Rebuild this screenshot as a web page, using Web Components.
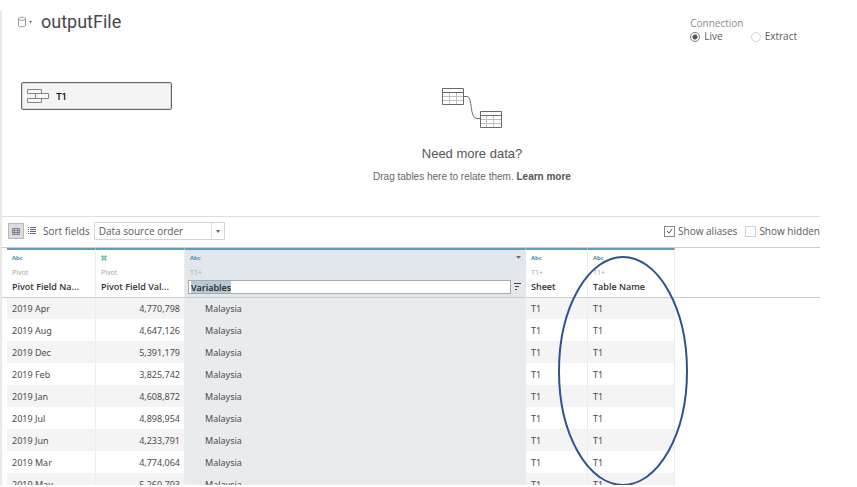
<!DOCTYPE html>
<html lang="en">
<head>
<meta charset="utf-8">
<title>outputFile</title>
<style>
body{margin:0;background:#fff;color:#5a5a5a;font-family:"Open Sans","Noto Sans",sans-serif;font-size:10px}
</style>
</head>
<body>
<data-source-page></data-source-page>
<script>
class BaseElement extends HTMLElement {
  constructor() {
    super();
    this.attachShadow({mode: 'open'}).innerHTML = this.constructor.template;
  }
}

customElements.define('source-header', class extends BaseElement {
  static template = `<style>
    :host{display:flex;justify-content:space-between;align-items:flex-start;padding:0 23px 0 14px}
    .title{display:flex;align-items:center;gap:8px}
    h1{margin:0;font:400 18px/22px Roboto,sans-serif;color:#484848}
    button{border:0;background:none;padding:0;display:flex}
    fieldset{border:0;margin:0;padding:5px 0 0;min-width:0}
    legend{padding:0;float:left;line-height:14px;color:#8a8a8a}
    .options{clear:both;display:flex;gap:28px}
    label{display:flex;align-items:center;gap:4px;line-height:13px}
    input{appearance:none;margin:0;box-sizing:border-box;width:10px;height:10px;border:1px solid #d5d5d5;border-radius:50%;background:#fff}
    input:checked{border-color:#777;background:radial-gradient(circle,#555 0 2px,#fff 3px)}
  </style>
  <div class="title">
    <button aria-label="Data source menu"><svg width="17" height="14" viewBox="0 0 17 14" fill="none" stroke="#959595"><path d="M2.5 3.5C2.5 1.8 9.5 1.8 9.5 3.5V10.5C9.5 12.2 2.5 12.2 2.5 10.5ZM2.5 3.5C2.5 5.8 9.5 5.8 9.5 3.5"/><path d="M13 6h3l-1.500 2z" fill="#555" stroke="none"/></svg></button>
    <h1>outputFile</h1>
  </div>
  <fieldset><legend>Connection</legend>
    <div class="options"><label><input type="radio" name="c" checked>Live</label><label><input type="radio" name="c">Extract</label></div>
  </fieldset>`;
});

customElements.define('logical-table', class extends BaseElement {
  static template = `<style>
    :host{display:flex;align-items:center;gap:6px;box-sizing:border-box;width:151px;height:28px;padding:0 5px;border:1px solid #666;border-radius:2px;background:#f4f4f4;outline:1px solid #d8d8d8;outline-offset:-2px;color:#111;font:600 9px Inter,sans-serif}
  </style>
  <svg width="23" height="16" viewBox="0 0 23 16" fill="#f8f8f8" stroke="#858585"><path d="M.5 1.5h14v4H.5zM.5 10.5h14v4H.5zM8.5 5.5h13v5h-13z"/></svg>
  <slot></slot>`;
});

customElements.define('relate-hint', class extends BaseElement {
  static template = `<style>
    :host{display:flex;flex-direction:column;align-items:center;font-family:"Liberation Sans",Arial,sans-serif}
    h2{margin:17px 0 8px;font-weight:400;font-size:13px;line-height:16px;color:#555}
    p{margin:0;line-height:14px;color:#666}
    a{color:#555;font-weight:700;text-decoration:none}
  </style>
  <svg width="62" height="42" viewBox="0 0 62 42" fill="none">
    <path d="M23 9.500h3c6 0 2 22 10 22h3" stroke="#707070"/>
    <path d="M8.500 5v12M15.500 5v12M2 9.500h21M2 13.500h21M45.500 28v12M52.500 28v12M39 32.500h21M39 36.500h21" stroke="#c0c0c0"/>
    <path d="M1.500 1.500h21v16h-21zM1.500 5.500h21M39.500 24.500h21v16h-21zM39.500 28.500h21" stroke="#6a6a6a"/>
  </svg>
  <h2>Need more data?</h2>
  <p>Drag tables here to relate them. <a href="#">Learn more</a></p>`;
});

customElements.define('grid-toolbar', class extends BaseElement {
  static template = `<style>
    :host{display:flex;align-items:center;box-sizing:border-box;height:31px;padding:0 0 2px 6px;border-top:1px solid #dedede;overflow:hidden;white-space:nowrap}
    button{display:flex;align-items:center;justify-content:center;box-sizing:border-box;width:16px;height:16px;padding:0;border:1px solid transparent;background:none}
    button.on{background:#dcdcdc;border-color:#b8b8b8}
    .sort{display:flex;align-items:center;gap:4px;margin-left:3px}
    .box{display:grid;align-items:center}
    .box>*{grid-area:1/1}
    select{appearance:none;box-sizing:border-box;width:131px;height:18px;padding:0 18px 0 4px;border:1px solid #d4d4d4;border-radius:1px;background:#fff;color:inherit;font:inherit}
    .arrow{justify-self:end;pointer-events:none;margin-right:1px}
    .checks{display:flex;gap:8px;margin-left:auto}
    .checks label{display:flex;align-items:center;gap:3px}
    .tick{appearance:none;margin:0;box-sizing:border-box;width:11px;height:11px;border:1px solid #d0d0d0;background:#fff}
    .tick:checked{border-color:#888;background:#fff url("data:image/svg+xml,%3Csvg xmlns='http://www.w3.org/2000/svg' width='9' height='9'%3E%3Cpath d='M2 4l2 2 3-4' fill='none' stroke='%23555'/%3E%3C/svg%3E") center no-repeat}
  </style>
  <button class="on" aria-label="Grid view"><svg width="8" height="7" fill="none" stroke="#7c8494"><path d="M.5 .5h7v6h-7zM0 2.5h8M0 4.5h8M2.5 0v7M5.5 0v7"/></svg></button>
  <button aria-label="List view"><svg width="8" height="8" stroke="#626b80" fill="none"><path d="M0 .5h1M2 .5h6M0 2.5h1M2 2.5h6M0 4.5h1M2 4.5h6M0 6.5h1M2 6.5h6"/></svg></button>
  <div class="sort"><label for="s">Sort fields</label>
    <span class="box"><select id="s"><option>Data source order</option></select><svg class="arrow" width="13" height="16"><path d="M.5 0v16" stroke="#dedede"/><path d="M5 7h4l-2 3z" fill="#666"/></svg></span>
  </div>
  <div class="checks"><label><input class="tick" type="checkbox" checked>Show aliases</label><label><input class="tick" type="checkbox">Show hidden</label></div>`;
});

customElements.define('data-grid', class extends BaseElement {
  static template = `<style>
    :host{display:block;border-top:1px solid #ccc;padding-left:5px;color:#4c4c4c;font:9px "Noto Sans",sans-serif;background:linear-gradient(#ccc,#ccc) 0 49px/100% 1px no-repeat}
    .wrap{position:relative;margin-right:145px}
    table{width:100%;table-layout:fixed;border-collapse:separate;border-spacing:0}
    th,td{box-sizing:border-box;padding:0 4px 0 5px;text-align:left;white-space:nowrap;border-right:1px solid #ececec}
    .name{width:89px}.value{width:89px}.sheet{width:62px}.table{width:87px}
    th{height:49px;padding-top:1px;border-top:2px solid #5d9dbb;vertical-align:top;font-weight:400}
    th.sel{background:#e2e7eb;padding:1px 4px 0 3px;border-right-color:#e2e7eb}
    .type{display:flex;align-items:center;justify-content:space-between;height:13px;color:#33839f;font-size:6px;font-weight:600}
    .src{height:15px;line-height:18px;color:#aaa;font-size:7px}
    .title{line-height:16px;color:#333;font:600 9px/16px "Open Sans",sans-serif}
    .sel .type,.sel .src{padding-left:2px}
    .edit{display:flex;align-items:center;gap:3px;padding-top:1px}
    input{flex:1;min-width:0;box-sizing:border-box;height:14px;padding:0 2px;border:1px solid #aaa;outline:0;background:#fff;color:#222;font:600 9px "Open Sans",sans-serif}
    input::selection{background:#b9c8d3;color:#222}
    td{height:22px}
    tr:nth-child(odd) td{background:#f4f4f4}
    tbody tr:first-child td{border-top:1px solid #ccc}
    td:nth-child(2){text-align:right}
    tbody tr:nth-child(n) td:nth-child(3){padding-left:20px;background:#e8ecef;border-right-color:#e8ecef}
    .ring{position:absolute;top:8px;right:-13px;width:130px;height:230px;pointer-events:none}
  </style>
  <div class="wrap"><table>
    <colgroup><col class="name"><col class="value"><col><col class="sheet"><col class="table"></colgroup>
    <thead><tr>
      <th><div class="type">Abc</div><div class="src">Pivot</div><div class="title">Pivot Field Na...</div></th>
      <th><div class="type"><svg width="6" height="6" stroke="#7cc4aa"><path d="M0 1.500h6M0 4.500h6M1.500 0v6M4.500 0v6M1 3h4M3 1v4"/></svg></div><div class="src">Pivot</div><div class="title">Pivot Field Val...</div></th>
      <th class="sel"><div class="type">Abc<svg width="5" height="3"><path d="M0 0h5L2.500 3z" fill="#67717c"/></svg></div><div class="src">T1+</div><div class="edit"><input aria-label="Field name" value="Variables"><svg width="7" height="8" stroke="#444"><path d="M0 .5h7M1 3.500h4M1 6.500h2"/></svg></div></th>
      <th><div class="type">Abc</div><div class="src">T1+</div><div class="title">Sheet</div></th>
      <th><div class="type">Abc</div><div class="src">T1+</div><div class="title">Table Name</div></th>
    </tr></thead><tbody></tbody></table>
    <svg class="ring" viewBox="0 0 130 230" fill="none" stroke="#2f5391" stroke-width="2"><ellipse cx="65" cy="115" rx="64" ry="114"/></svg>
  </div>`;
  connectedCallback() {
    const rows = [['2019 Apr','4,770,798'],['2019 Aug','4,647,126'],['2019 Dec','5,391,179'],['2019 Feb','3,825,742'],['2019 Jan','4,608,872'],['2019 Jul','4,898,954'],['2019 Jun','4,233,791'],['2019 Mar','4,774,064'],['2019 May','5,260,793']];
    this.shadowRoot.querySelector('tbody').innerHTML = rows.map(([n, v]) => `<tr><td>${n}</td><td>${v}</td><td>Malaysia</td><td>T1</td><td>T1</td></tr>`).join('');
    const input = this.shadowRoot.querySelector('input');
    input.focus();
    input.select();
  }
});

customElements.define('data-source-page', class extends BaseElement {
  static template = `<style>
    :host{display:block;box-sizing:border-box;height:100vh;padding:11px 37px 2px 0}
    main{height:100%;box-sizing:border-box;border-left:2px solid #e8e8e8;overflow:hidden}
    .canvas{display:grid;grid-template-columns:151px 1fr;align-items:start;padding:44px 48px 32px 19px}
    logical-table{margin-top:-5px}
  </style>
  <main>
    <source-header></source-header>
    <div class="canvas"><logical-table>T1</logical-table><relate-hint></relate-hint></div>
    <grid-toolbar></grid-toolbar>
    <data-grid></data-grid>
  </main>`;
});
</script>
</body>
</html>
